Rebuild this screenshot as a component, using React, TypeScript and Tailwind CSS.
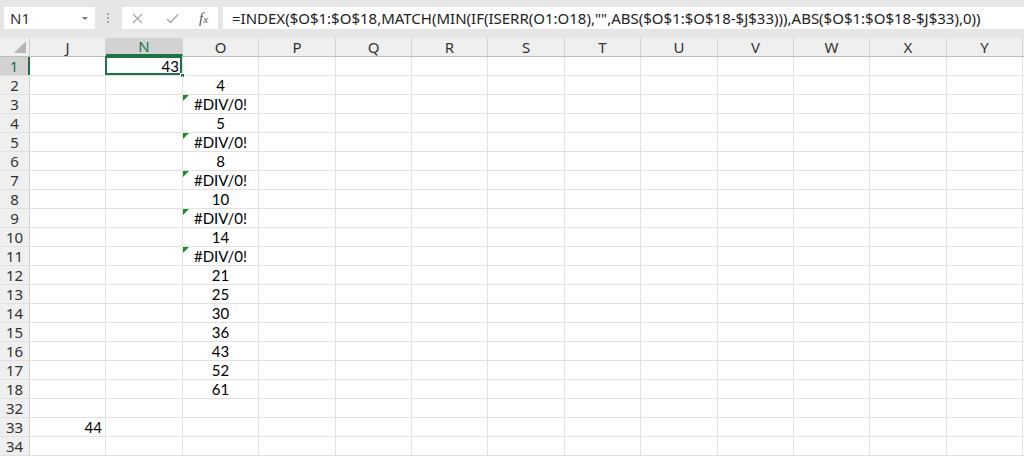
import React from "react";

const cols = [
  { l: "J", w: "w-[76px]" },
  { l: "N", w: "w-[77px]" },
  { l: "O", w: "w-[76px]" },
  { l: "P", w: "w-[77px]" },
  { l: "Q", w: "w-[76px]" },
  { l: "R", w: "w-[76px]" },
  { l: "S", w: "w-[77px]" },
  { l: "T", w: "w-[76px]" },
  { l: "U", w: "w-[77px]" },
  { l: "V", w: "w-[76px]" },
  { l: "W", w: "w-[76px]" },
  { l: "X", w: "w-[77px]" },
  { l: "Y", w: "w-[76px]" },
];

type Row = { n: number; j?: string; nVal?: string; o?: string };

const rows: Row[] = [
  { n: 1, nVal: "43" },
  { n: 2, o: "4" },
  { n: 3, o: "#DIV/0!" },
  { n: 4, o: "5" },
  { n: 5, o: "#DIV/0!" },
  { n: 6, o: "8" },
  { n: 7, o: "#DIV/0!" },
  { n: 8, o: "10" },
  { n: 9, o: "#DIV/0!" },
  { n: 10, o: "14" },
  { n: 11, o: "#DIV/0!" },
  { n: 12, o: "21" },
  { n: 13, o: "25" },
  { n: 14, o: "30" },
  { n: 15, o: "36" },
  { n: 16, o: "43" },
  { n: 17, o: "52" },
  { n: 18, o: "61" },
  { n: 32 },
  { n: 33, j: "44" },
  { n: 34 },
];

const formula =
  '=INDEX($O$1:$O$18,MATCH(MIN(IF(ISERR(O1:O18),"",ABS($O$1:$O$18-$J$33))),ABS($O$1:$O$18-$J$33),0))';

function Cell({ col, row }: { col: string; row: Row }) {
  const w = cols.find((c) => c.l === col)!.w;
  let content: React.ReactNode = null;
  let align = "justify-end pr-[3px]";
  const isSel = col === "N" && row.n === 1;
  if (col === "J" && row.j) content = row.j;
  if (col === "N" && row.nVal) content = row.nVal;
  if (col === "O" && row.o) {
    content = row.o;
    align = "justify-center";
  }
  const isErr = col === "O" && row.o === "#DIV/0!";
  return (
    <div
      className={`${w} h-full shrink-0 flex items-center ${align} border-r border-[#e1e1e1] relative`}
    >
      {isErr && (
        <div className="absolute left-0 top-0 w-0 h-0 border-t-[6px] border-t-[#1e8a2e] border-r-[6px] border-r-transparent" />
      )}
      {content}
      {isSel && (
        <>
          <div className="absolute -left-px -top-px -right-0 -bottom-0 border-2 border-[#217346]" />
          <div className="absolute right-[-3px] bottom-[-3px] w-[5px] h-[5px] bg-[#217346] border border-white" />
        </>
      )}
    </div>
  );
}

export default function App() {
  return (
    <div className="w-[1024px] h-[457px] overflow-hidden bg-white flex flex-col">
      {/* formula bar */}
      <div className="h-[38px] shrink-0 bg-[#e6e6e6] flex items-start pt-[7px] font-['Noto_Sans',sans-serif]">
        <div className="ml-[4px] w-[91px] h-[22px] bg-white flex items-center justify-between px-[6px] text-[15px] text-[#333]">
          <span>N1</span>
          <span className="w-0 h-0 border-l-[3px] border-r-[3px] border-t-[3px] border-l-transparent border-r-transparent border-t-[#777] mr-[1px]" />
        </div>
        <div className="ml-[11px] w-[4px] h-[22px] flex flex-col items-center justify-center gap-[2px]">
          <span className="w-[2px] h-[2px] bg-[#a8a8a8]" />
          <span className="w-[2px] h-[2px] bg-[#a8a8a8]" />
          <span className="w-[2px] h-[2px] bg-[#a8a8a8]" />
        </div>
        <div className="ml-[12px] w-[96px] h-[22px] bg-white flex items-center">
          <svg className="ml-[10px]" width="11" height="11" viewBox="0 0 11 11">
            <path d="M1 1 L10 10 M10 1 L1 10" stroke="#a6a6a6" strokeWidth="1.2" />
          </svg>
          <svg className="ml-[23px]" width="13" height="11" viewBox="0 0 13 11">
            <path d="M1 6 L4.5 9.5 L12 1.5" stroke="#a6a6a6" strokeWidth="1.3" fill="none" />
          </svg>
          <span className="ml-[20px] font-['Liberation_Serif',serif] italic text-[15px] text-[#555] leading-none">
            f<span className="text-[11px]">x</span>
          </span>
        </div>
        <div className="ml-[5px] flex-1 h-[22px] bg-white flex items-center pl-[9px] text-[15px] text-[#222] whitespace-nowrap overflow-hidden">
          {formula}
        </div>
      </div>
      {/* column headers */}
      <div className="h-[19px] shrink-0 flex bg-[#efefef] border-b border-[#bdbdbd] font-['Noto_Sans',sans-serif] text-[15px] text-[#333]">
        <div className="w-[30px] h-full shrink-0 border-r border-[#cfcfcf] relative">
          <div className="absolute right-[3px] bottom-[3px] w-0 h-0 border-l-[12px] border-l-transparent border-b-[12px] border-b-[#b7b7b7]" />
        </div>
        {cols.map((c) => (
          <div
            key={c.l}
            className={`${c.w} h-full shrink-0 flex items-center justify-center border-r border-[#d4d4d4] ${
              c.l === "N" ? "bg-[#d2d2d2] text-[#217346] border-b-2 border-b-[#217346]" : ""
            }`}
          >
            {c.l}
          </div>
        ))}
      </div>
      {/* rows */}
      {rows.map((r) => (
        <div key={r.n} className="h-[19px] shrink-0 flex border-b border-[#e1e1e1] font-['Lato',sans-serif] text-[15px] text-black">
          <div
            className={`w-[30px] h-full shrink-0 flex items-center justify-center font-['Noto_Sans',sans-serif] text-[15px] border-r ${
              r.n === 1
                ? "bg-[#d2d2d2] text-[#217346] border-r-2 border-r-[#217346]"
                : "bg-[#efefef] text-[#333] border-[#cfcfcf]"
            }`}
          >
            {r.n}
          </div>
          {cols.map((c) => (
            <Cell key={c.l} col={c.l} row={r} />
          ))}
        </div>
      ))}
    </div>
  );
}
